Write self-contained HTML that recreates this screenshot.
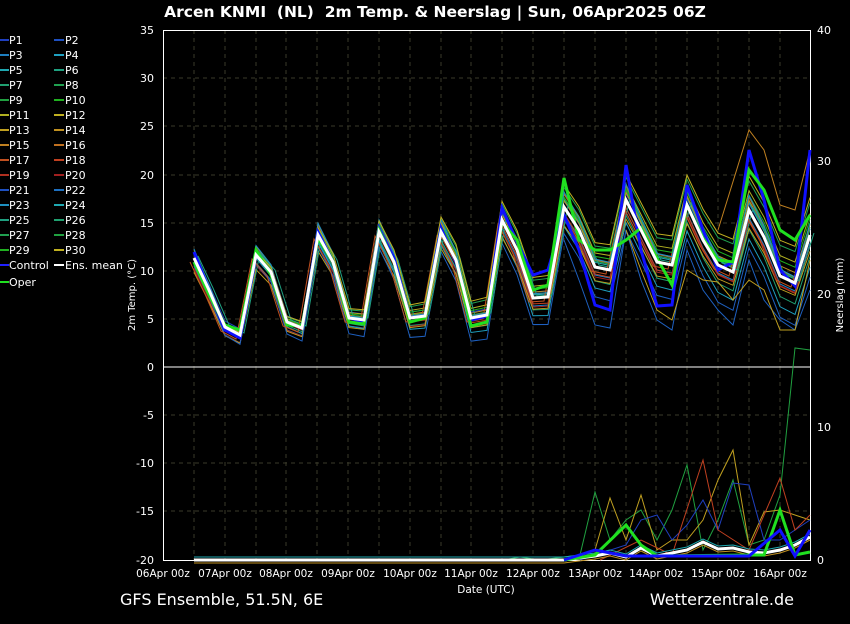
<!DOCTYPE html>
<html><head><meta charset="utf-8"><style>
body{margin:0;background:#000;width:850px;height:620px;overflow:hidden;font-family:"DejaVu Sans","Liberation Sans",sans-serif;}
</style></head><body>
<svg width="850" height="620" xmlns="http://www.w3.org/2000/svg" font-family="DejaVu Sans, Liberation Sans, sans-serif">
<rect width="850" height="620" fill="#000"/>
<text x="435" y="17" fill="#fff" font-size="15.5" font-weight="bold" text-anchor="middle" xml:space="preserve">Arcen KNMI  (NL)  2m Temp. &amp; Neerslag | Sun, 06Apr2025 06Z</text>
<g stroke="#3a3a2a" stroke-dasharray="4,4" stroke-width="1">
<line x1="163" y1="78" x2="810" y2="78"/><line x1="163" y1="126" x2="810" y2="126"/><line x1="163" y1="175" x2="810" y2="175"/><line x1="163" y1="223" x2="810" y2="223"/><line x1="163" y1="271" x2="810" y2="271"/><line x1="163" y1="319" x2="810" y2="319"/><line x1="163" y1="415" x2="810" y2="415"/><line x1="163" y1="463" x2="810" y2="463"/><line x1="163" y1="511" x2="810" y2="511"/>
<line x1="194" y1="30" x2="194" y2="560"/><line x1="225" y1="30" x2="225" y2="560"/><line x1="256" y1="30" x2="256" y2="560"/><line x1="286" y1="30" x2="286" y2="560"/><line x1="317" y1="30" x2="317" y2="560"/><line x1="348" y1="30" x2="348" y2="560"/><line x1="379" y1="30" x2="379" y2="560"/><line x1="410" y1="30" x2="410" y2="560"/><line x1="441" y1="30" x2="441" y2="560"/><line x1="471" y1="30" x2="471" y2="560"/><line x1="502" y1="30" x2="502" y2="560"/><line x1="533" y1="30" x2="533" y2="560"/><line x1="564" y1="30" x2="564" y2="560"/><line x1="595" y1="30" x2="595" y2="560"/><line x1="626" y1="30" x2="626" y2="560"/><line x1="656" y1="30" x2="656" y2="560"/><line x1="687" y1="30" x2="687" y2="560"/><line x1="718" y1="30" x2="718" y2="560"/><line x1="749" y1="30" x2="749" y2="560"/><line x1="780" y1="30" x2="780" y2="560"/>
</g>
<line x1="163" y1="367" x2="810" y2="367" stroke="#fff"/>
<rect x="163.5" y="30.5" width="647" height="530" fill="none" stroke="#fff"/>
<defs>
<polyline id="m" fill="none" points="194,258 209,290 225,327 240,335 256,255 271,272 287,322 302,328 318,235 333,262 349,318 364,320 379,232 394,262 410,318 425,316 441,232 456,260 471,318 487,315 502,220 517,250 533,298 548,297 564,207 579,230 595,267 610,270 626,200 641,230 657,262 672,265 687,205 703,240 718,265 733,272 749,210 764,237 780,276 795,283 810,235"/>
<polyline id="p" fill="none" points="194,560 500,560 564,560 579,558 595,556 610,553 626,557 641,548 657,556 672,553 687,550 703,542 718,549 733,548 749,552 764,553 780,550 795,545 810,537"/>
</defs>
<g stroke-width="1">
<use href="#m" stroke="#1f3fbf" transform="translate(0,-6)"/>
<use href="#m" stroke="#1e7fc0" transform="translate(0,8)"/>
<use href="#m" stroke="#1fa8b0" transform="translate(0,-18) scale(1,1.05)"/>
<use href="#m" stroke="#20a070" transform="translate(0,-6.8) skewY(2)"/>
<use href="#m" stroke="#20a040" transform="translate(0,-22) scale(1,1.06)"/>
<use href="#m" stroke="#b0b020" transform="translate(0,6.8) skewY(-2)"/>
<use href="#m" stroke="#c09020" transform="translate(0,3.4) skewY(-1)"/>
<use href="#m" stroke="#c07020" transform="translate(0,-34) scale(1,1.1)"/>
<use href="#m" stroke="#c04020" transform="translate(0,-3.4) skewY(1)"/>
<use href="#m" stroke="#a02020" transform="translate(0,18) scale(1,0.97)"/>
<use href="#m" stroke="#1fa0c0" transform="translate(0,-10.2) skewY(3)"/>
<use href="#m" stroke="#20a050" transform="translate(0,10.2) skewY(-3)"/>
<use href="#m" stroke="#c0a020" transform="translate(0,35) scale(1,0.92)"/>
<use href="#m" stroke="#1e60c0" transform="translate(0,-12) skewY(3.5) scale(1,1.02)"/>
<use href="#m" stroke="#1fa080" transform="translate(4,-2)"/>
<use href="#m" stroke="#c05020" transform="translate(-4,4)"/>
<use href="#m" stroke="#20b020" transform="translate(0,5) skewY(-1.5)"/>
<use href="#m" stroke="#1e90c0" transform="translate(0,-40) scale(1,1.12)"/>
<use href="#m" stroke="#c0b020" transform="translate(0,12) skewY(-3.5)"/>
<polyline fill="none" stroke="#c08020" points="718,230 749,130 764,150 780,205 795,210 810,150"/>
<polyline fill="none" stroke="#1e60c0" points="564,240 579,280 595,325 610,328 626,230 641,280 657,320 672,330 687,250 703,290 718,310 733,325 749,260 764,300 780,320 795,330 810,290"/>
<polyline fill="none" stroke="#c0a020" points="626,230 641,270 657,310 672,320 687,270 703,280 718,282 733,300 749,280 764,290 780,330 795,330 810,260"/>
<polyline fill="none" stroke="#20a040" points="503,560 520,557 540,560 580,555 595,492 610,540 626,520 641,510 657,540 672,510 687,465 703,550 718,520 733,480 749,545 764,540 780,495 795,348 810,350"/>
<polyline fill="none" stroke="#c0a020" points="564,560 595,550 610,498 626,540 641,495 657,550 672,540 687,540 703,520 718,480 733,450 749,545 764,512 780,510 810,520"/>
<polyline fill="none" stroke="#1f3fbf" points="580,560 626,545 641,520 657,515 672,540 687,525 703,500 718,530 733,483 749,485 764,540 780,540 810,520"/>
<polyline fill="none" stroke="#c04020" points="600,560 641,540 672,555 703,460 718,530 749,550 780,478 795,530 810,515"/>
<use href="#p" stroke="#1fa8b0" transform="translate(0,-3)"/>
<use href="#p" stroke="#c09020" transform="translate(0,3)"/>
</g>
<polyline fill="none" stroke="#1010ff" stroke-width="3" points="194,252 209,290 225,330 240,338 256,255 271,272 287,322 302,328 318,232 333,262 349,318 364,322 379,228 394,258 410,318 425,316 441,228 456,262 471,320 487,316 502,208 517,242 533,275 548,270 564,215 579,250 595,305 610,310 626,165 641,250 657,306 672,305 687,185 703,230 718,270 733,262 749,150 764,200 780,270 795,286 810,150"/>
<polyline fill="none" stroke="#20e020" stroke-width="3" points="194,262 209,295 225,325 240,330 256,250 271,275 287,325 302,326 318,238 333,262 349,322 364,324 379,230 394,262 410,322 425,318 441,232 456,260 471,326 487,322 502,222 517,240 533,290 548,285 564,178 579,240 595,250 610,250 626,240 641,228 657,258 672,285 687,205 703,238 718,260 733,262 749,170 764,190 780,230 795,240 810,215"/>
<use href="#m" stroke="#fff" stroke-width="3"/>
<use href="#p" stroke="#fff" stroke-width="3"/>
<polyline fill="none" stroke="#20e020" stroke-width="3" points="564,560 595,555 626,525 641,545 657,556 749,555 764,555 780,510 795,555 810,552"/>
<polyline fill="none" stroke="#1010ff" stroke-width="3" points="564,560 595,550 626,556 657,556 749,556 780,530 795,556 810,530"/>
<g fill="#fff" font-size="11" text-anchor="end">
<text x="154" y="34">35</text><text x="154" y="82">30</text><text x="154" y="130">25</text><text x="154" y="179">20</text><text x="154" y="227">15</text><text x="154" y="275">10</text><text x="154" y="323">5</text><text x="154" y="371">0</text><text x="154" y="419">-5</text><text x="154" y="467">-10</text><text x="154" y="515">-15</text><text x="154" y="564">-20</text>
</g>
<g fill="#fff" font-size="11">
<text x="817" y="34">40</text><text x="817" y="165">30</text><text x="817" y="298">20</text><text x="817" y="431">10</text><text x="817" y="564">0</text>
</g>
<text transform="translate(135,295) rotate(-90)" fill="#fff" font-size="10" text-anchor="middle">2m Temp. (°C)</text>
<text transform="translate(843,295) rotate(-90)" fill="#fff" font-size="10" text-anchor="middle">Neerslag (mm)</text>
<g fill="#fff" font-size="10.5" text-anchor="middle">
<text x="163" y="577">06Apr 00z</text><text x="225" y="577">07Apr 00z</text><text x="286" y="577">08Apr 00z</text><text x="348" y="577">09Apr 00z</text><text x="410" y="577">10Apr 00z</text><text x="471" y="577">11Apr 00z</text><text x="533" y="577">12Apr 00z</text><text x="595" y="577">13Apr 00z</text><text x="656" y="577">14Apr 00z</text><text x="718" y="577">15Apr 00z</text><text x="780" y="577">16Apr 00z</text>
</g>
<text x="486" y="593" fill="#fff" font-size="10.5" text-anchor="middle">Date (UTC)</text>
<text x="120" y="605" fill="#fff" font-size="16">GFS Ensemble, 51.5N, 6E</text>
<text x="794" y="605" fill="#fff" font-size="16" text-anchor="end">Wetterzentrale.de</text>
<g font-size="11" fill="#fff">
<g stroke-width="2">
<line x1="0" y1="40" x2="9" y2="40" stroke="#1f3fbf"/><line x1="54" y1="40" x2="64" y2="40" stroke="#1e50c0"/>
<line x1="0" y1="55" x2="9" y2="55" stroke="#1e7fc0"/><line x1="54" y1="55" x2="64" y2="55" stroke="#1fa0c0"/>
<line x1="0" y1="70" x2="9" y2="70" stroke="#1fa8b0"/><line x1="54" y1="70" x2="64" y2="70" stroke="#1fa080"/>
<line x1="0" y1="85" x2="9" y2="85" stroke="#20a070"/><line x1="54" y1="85" x2="64" y2="85" stroke="#20a050"/>
<line x1="0" y1="100" x2="9" y2="100" stroke="#20a040"/><line x1="54" y1="100" x2="64" y2="100" stroke="#20b020"/>
<line x1="0" y1="115" x2="9" y2="115" stroke="#b0b020"/><line x1="54" y1="115" x2="64" y2="115" stroke="#c0b020"/>
<line x1="0" y1="130" x2="9" y2="130" stroke="#c0a020"/><line x1="54" y1="130" x2="64" y2="130" stroke="#c09020"/>
<line x1="0" y1="145" x2="9" y2="145" stroke="#c08020"/><line x1="54" y1="145" x2="64" y2="145" stroke="#c07020"/>
<line x1="0" y1="160" x2="9" y2="160" stroke="#c05020"/><line x1="54" y1="160" x2="64" y2="160" stroke="#c04020"/>
<line x1="0" y1="175" x2="9" y2="175" stroke="#b03020"/><line x1="54" y1="175" x2="64" y2="175" stroke="#a02020"/>
<line x1="0" y1="190" x2="9" y2="190" stroke="#1e50c0"/><line x1="54" y1="190" x2="64" y2="190" stroke="#1e70c0"/>
<line x1="0" y1="205" x2="9" y2="205" stroke="#1e90c0"/><line x1="54" y1="205" x2="64" y2="205" stroke="#1fa8b0"/>
<line x1="0" y1="220" x2="9" y2="220" stroke="#1fa080"/><line x1="54" y1="220" x2="64" y2="220" stroke="#20a070"/>
<line x1="0" y1="235" x2="9" y2="235" stroke="#20a050"/><line x1="54" y1="235" x2="64" y2="235" stroke="#20a040"/>
<line x1="0" y1="250" x2="9" y2="250" stroke="#20b020"/><line x1="54" y1="250" x2="64" y2="250" stroke="#c0b020"/>
<line x1="0" y1="265" x2="9" y2="265" stroke="#2020ff"/><line x1="54" y1="265" x2="64" y2="265" stroke="#fff"/>
<line x1="0" y1="282" x2="9" y2="282" stroke="#20e020"/>
</g>
<text x="9" y="44">P1</text><text x="65" y="44">P2</text>
<text x="9" y="59">P3</text><text x="65" y="59">P4</text>
<text x="9" y="74">P5</text><text x="65" y="74">P6</text>
<text x="9" y="89">P7</text><text x="65" y="89">P8</text>
<text x="9" y="104">P9</text><text x="65" y="104">P10</text>
<text x="9" y="119">P11</text><text x="65" y="119">P12</text>
<text x="9" y="134">P13</text><text x="65" y="134">P14</text>
<text x="9" y="149">P15</text><text x="65" y="149">P16</text>
<text x="9" y="164">P17</text><text x="65" y="164">P18</text>
<text x="9" y="179">P19</text><text x="65" y="179">P20</text>
<text x="9" y="194">P21</text><text x="65" y="194">P22</text>
<text x="9" y="209">P23</text><text x="65" y="209">P24</text>
<text x="9" y="224">P25</text><text x="65" y="224">P26</text>
<text x="9" y="239">P27</text><text x="65" y="239">P28</text>
<text x="9" y="254">P29</text><text x="65" y="254">P30</text>
<text x="9" y="269">Control</text><text x="65" y="269">Ens. mean</text>
<text x="9" y="286">Oper</text>
</g>
</svg>
</body></html>
